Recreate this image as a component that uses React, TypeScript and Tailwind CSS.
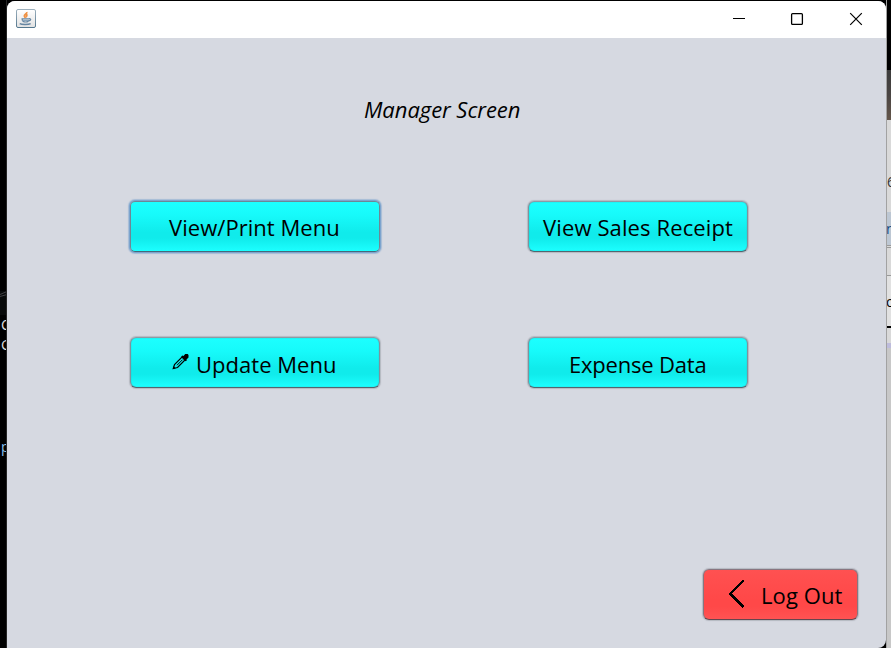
import type { ReactNode } from "react";

const cyan =
  "bg-[linear-gradient(to_bottom,#1cffff_0%,#17fbfb_25%,#10ebeb_62%,#10ebeb_74%,#1cffff_100%)]";
const edge =
  "rounded-[6px] border border-t-[#8d9aa5] border-x-[#7f929d] border-b-[#52656f] shadow-[0_0_1px_1px_#b4b8c0,inset_0_0_1px_#3f8a94]";

function ActionButton({ className, children }: { className: string; children: ReactNode }) {
  return (
    <button
      className={`flex h-[51px] items-center whitespace-nowrap text-[22px] leading-[30px] text-black ${className}`}
    >
      {children}
    </button>
  );
}

function JavaIcon() {
  return (
    <svg width="20" height="19" viewBox="0 0 20 19" className="ml-[9px] mt-[8px] shrink-0">
      <defs>
        <linearGradient id="tile" x1="0" y1="0" x2="0" y2="1">
          <stop offset="0" stopColor="#fff" />
          <stop offset="1" stopColor="#e2e2e2" />
        </linearGradient>
        <linearGradient id="rim" x1="0" y1="0" x2="0" y2="1">
          <stop offset="0" stopColor="#9db0bd" />
          <stop offset="1" stopColor="#55788f" />
        </linearGradient>
      </defs>
      <rect x="0.5" y="0.5" width="19" height="18" rx="1.5" fill="url(#tile)" stroke="url(#rim)" />
      <path d="M10.8 3c.6 1.700-2.700 2.200-2.500 4 .1.900.9 1.300 1.100 2M11.600 5.500c-1.700 1-1.500 1.700-.6 2.600" fill="none" stroke="#ef9143" strokeWidth="1.700" />
      <path d="M5.500 9.800h8M6.200 10.500c0 2 1 2.500 3.600 2.500 2 0 2.700-.6 2.800-2M13.200 9.700c2.200-.2 1.900 1.900-.6 2.200" fill="none" stroke="#6686a2" strokeWidth="1.200" />
      <path d="M6.500 11.500h6" stroke="#8ba5bb" strokeWidth="1" />
      <path d="M3.700 14.600c2 1.100 8.700 1.100 11 0" fill="none" stroke="#6686a2" strokeWidth="1.400" />
    </svg>
  );
}

function PencilIcon() {
  return (
    <svg width="17" height="17" viewBox="0 0 17 17" className="-mt-[4px] mr-[7px] shrink-0">
      <path d="M1.300 15.500l1.200-4L10 4l3 3-7.500 7.500z" fill="none" stroke="#000" strokeWidth="1.200" />
      <path d="M5 12.200l5.500-5.500" stroke="#000" strokeWidth="1" />
      <path d="M9.300 3.500l1-1 1.200.5L13.200 1h2.500L16.500 2v2.500l-2 2 .3 1-1.300.8z" fill="#000" />
      <path d="M.8 16.200l.8-3 2 2z" fill="#000" />
    </svg>
  );
}

function TitleBar() {
  return (
    <header className="flex h-[37px] bg-white">
      <JavaIcon />
      <div className="ml-auto mr-[23px] mt-[11px] flex h-[14px]">
        <svg width="14" height="14" viewBox="0 0 14 14" className="mr-[44px]">
          <path d="M1 6.500h12" stroke="#000" />
        </svg>
        <svg width="14" height="14" viewBox="0 0 14 14" className="mr-[45px]">
          <rect x="1.600" y="1.600" width="10.800" height="10.800" rx="1" fill="none" stroke="#000" strokeWidth="1.300" />
        </svg>
        <svg width="14" height="14" viewBox="0 0 14 14">
          <path d="M1.200 1.200l11.600 11.600M12.800 1.200l-11.600 11.600" stroke="#000" strokeWidth="1.200" />
        </svg>
      </div>
    </header>
  );
}

function LeftBackdrop() {
  return (
    <div className="h-[648px] w-[7px] shrink-0 overflow-hidden border-r border-[#262626] bg-black text-[14px] leading-[20px] text-[#e2e2e2]">
      <div className="mt-[291px] h-[24px] bg-[#080a0a]">
        <svg width="7" height="8" viewBox="0 0 7 8">
          <path d="M0 3.500l7-3M0 5.500l7-2" stroke="#414145" />
        </svg>
      </div>
      <div className="pl-px">C</div>
      <div className="pl-px">G</div>
      <div className="mt-[82px] pl-px text-[#8cc0ed]">p</div>
    </div>
  );
}

function RightBackdrop() {
  return (
    <div className="h-[648px] w-[5px] shrink-0 overflow-hidden border-l border-[#a2a2a2] bg-[#d9d9d9] text-[14px] leading-[20px]">
      <div className="h-[70px] bg-black" />
      <div className="h-[50px] bg-[linear-gradient(#3c3c3c,#4a4543,#65564b)]" />
      <div className="h-[92px] pt-[52px] text-[#333]">6</div>
      <div className="h-[33px] bg-[#bdc7d3] pt-[7px] text-[#164a80]">
        <span className="-ml-px">n</span>
      </div>
      <div className="h-[3px] border-y border-[#999]" />
      <div className="h-[28px] border-b border-[#999]" />
      <div className="h-[50px] bg-[#e1e1e1] pt-[16px] text-black">
        <span className="-ml-px">o</span>
      </div>
      <div className="h-[2px] bg-black" />
      <div className="h-[15px]" />
      <div className="h-[5px] bg-[#bebcdc]" />
      <div className="h-[300px] bg-[#c8c8c8]" />
    </div>
  );
}

export default function App() {
  return (
    <div className="flex h-[648px] w-[891px] overflow-hidden bg-black font-['Open_Sans','Noto_Sans',sans-serif]">
      <LeftBackdrop />
      <main className="mt-px h-[647px] w-[879px] shrink-0 overflow-hidden rounded-t-[8px] rounded-br-[8px] bg-[#d6d9e1]">
        <TitleBar />
        <h1 className="mt-[56px] pl-[357px] text-[22px] italic leading-[30px] tracking-[-0.050px] text-black">
          Manager Screen
        </h1>
        <div className="ml-[123px] mt-[77px] grid grid-cols-[250px_220px] gap-x-[148px] gap-y-[85px]">
          <ActionButton
            className={`${cyan} rounded-[5px] border border-[#6d8795] border-b-[#466879] pl-[38px] tracking-[0.050px] shadow-[0_0_0_1px_#7ca4ce,0_0_1px_2px_#a6bcd6]`}
          >
            View/Print Menu
          </ActionButton>
          <ActionButton className={`${cyan} ${edge} pl-[14px] tracking-[0.120px]`}>
            View Sales Receipt
          </ActionButton>
          <ActionButton className={`${cyan} ${edge} pl-[41px] pt-[2px] tracking-[0.030px]`}>
            <PencilIcon />
            Update Menu
          </ActionButton>
          <ActionButton className={`${cyan} ${edge} pl-[40px] pt-[2px] tracking-[-0.200px]`}>
            Expense Data
          </ActionButton>
        </div>
        <ActionButton
          className={`ml-[696px] mt-[181px] w-[155px] rounded-[6px] border border-[#89757f] border-b-[#65464e] bg-[linear-gradient(#ff5151,#ff4848_60%,#ff4848_75%,#ff5353)] pl-[24px] tracking-[0.080px] shadow-[0_0_1px_1px_#b4b8c0]`}
        >
          <svg width="18" height="30" viewBox="0 0 18 30" className="-mt-[2px] mr-[15px] shrink-0">
            <path d="M15.500 1.500L2.500 15l13 13" fill="none" stroke="#000" strokeWidth="2.200" shapeRendering="crispEdges" />
          </svg>
          Log Out
        </ActionButton>
      </main>
      <RightBackdrop />
    </div>
  );
}
